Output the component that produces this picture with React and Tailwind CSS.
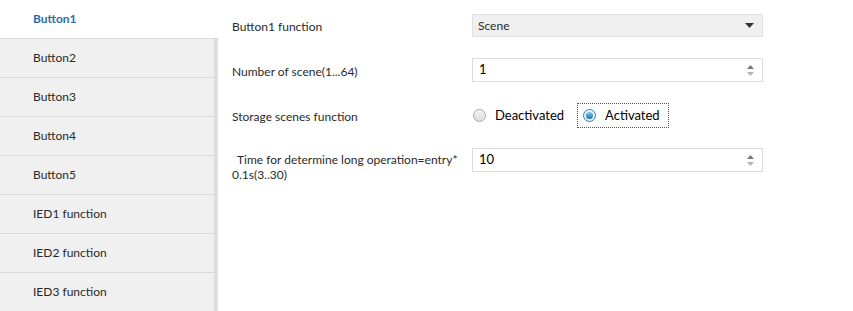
import { useState } from 'react';

const MENU = [
  'Button1',
  'Button2',
  'Button3',
  'Button4',
  'Button5',
  'IED1 function',
  'IED2 function',
  'IED3 function',
];

// spinner arrows on the number fields
const Spin = () => (
  <div className="flex flex-col items-center gap-[3px] mr-[8px]">
    <svg width="7" height="4" viewBox="0 0 7 4">
      <path d="M0 4 L3.5 0 L7 4 Z" fill="#777" />
    </svg>
    <svg width="7" height="4" viewBox="0 0 7 4">
      <path d="M0 0 L7 0 L3.5 4 Z" fill="#b5b5b5" />
    </svg>
  </div>
);

const Radio = ({ checked }) => (
  <span
    className={
      'w-[13px] h-[13px] rounded-full border flex items-center justify-center ' +
      (checked
        ? 'border-[#3c7fb1] bg-[#e3eef7]'
        : 'border-[#a9a9a9] bg-gradient-to-b from-[#f4f4f4] to-[#dcdcdc]')
    }
  >
    {checked && (
      <span className="w-[7px] h-[7px] rounded-full bg-gradient-to-b from-[#7fd0f5] to-[#1d6fa5]" />
    )}
  </span>
);

const Row = ({ label, children, className = '' }) => (
  <div className={'flex ' + className}>
    <div className="w-[240px] shrink-0 leading-[15px] pt-[2px]">{label}</div>
    <div className="w-[291px]">{children}</div>
  </div>
);

const App = () => {
  const [active, setActive] = useState('Button1');
  const [storage, setStorage] = useState('on');

  return (
    <div
      className="flex w-[853px] h-[311px] bg-white text-[12px] text-[#2a2a2a] overflow-hidden"
      style={{ fontFamily: 'Lato, "Noto Sans", sans-serif' }}
    >
      {/* 左メニュー */}
      <div className="w-[218px] shrink-0 flex flex-col">
        {MENU.map((m) => (
          <div
            key={m}
            onClick={() => setActive(m)}
            className={
              'h-[39px] shrink-0 flex items-center pl-[33px] border-b border-[#d9d9d9] ' +
              (active === m
                ? 'bg-white text-[#2e6aa6] font-bold'
                : 'bg-[#f0f0f0] border-r-[4px] border-r-[#dedede]')
            }
          >
            {m}
          </div>
        ))}
      </div>

      {/* 設定パネル */}
      <div className="flex-1 pl-[14px] pt-[14px] flex flex-col">
        <Row label="Button1 function" className="items-center">
          <div className="h-[23px] bg-[#f0f0f0] border border-[#e0e0e0] flex items-center justify-between pl-[5px] pr-[8px]">
            <span className="pt-[1px]">Scene</span>
            <svg width="9" height="5" viewBox="0 0 9 5">
              <path d="M0 0 L9 0 L4.5 5 Z" fill="#333" />
            </svg>
          </div>
        </Row>

        <Row label="Number of scene(1...64)" className="items-center mt-[21px]">
          <div className="h-[24px] bg-white border border-[#dcdcdc] flex items-center justify-between pl-[6px] text-[13px] text-black">
            <span>1</span>
            <Spin />
          </div>
        </Row>

        <Row label="Storage scenes function" className="items-center mt-[21px]">
          <div className="flex items-center h-[25px] text-[13px] text-black">
            <label
              className="flex items-center gap-[9px] pl-[1px] cursor-pointer"
              onClick={() => setStorage('off')}
            >
              <Radio checked={storage === 'off'} />
              <span>Deactivated</span>
            </label>
            <label
              className={
                'flex items-center gap-[9px] ml-[13px] h-[25px] pl-[5px] pr-[8px] cursor-pointer border border-dotted ' +
                (storage === 'on' ? 'border-[#555]' : 'border-transparent')
              }
              onClick={() => setStorage('on')}
            >
              <Radio checked={storage === 'on'} />
              <span>Activated</span>
            </label>
          </div>
        </Row>

        <Row
          label={
            <div className="pt-[2px]">
              <span className="pl-[5px] whitespace-nowrap">Time for determine long operation=entry*</span>
              <br />
              0.1s(3..30)
            </div>
          }
          className="items-start mt-[20px]"
        >
          <div className="h-[24px] bg-white border border-[#dcdcdc] flex items-center justify-between pl-[6px] text-[13px] text-black">
            <span>10</span>
            <Spin />
          </div>
        </Row>
      </div>
    </div>
  );
};

export default App;
